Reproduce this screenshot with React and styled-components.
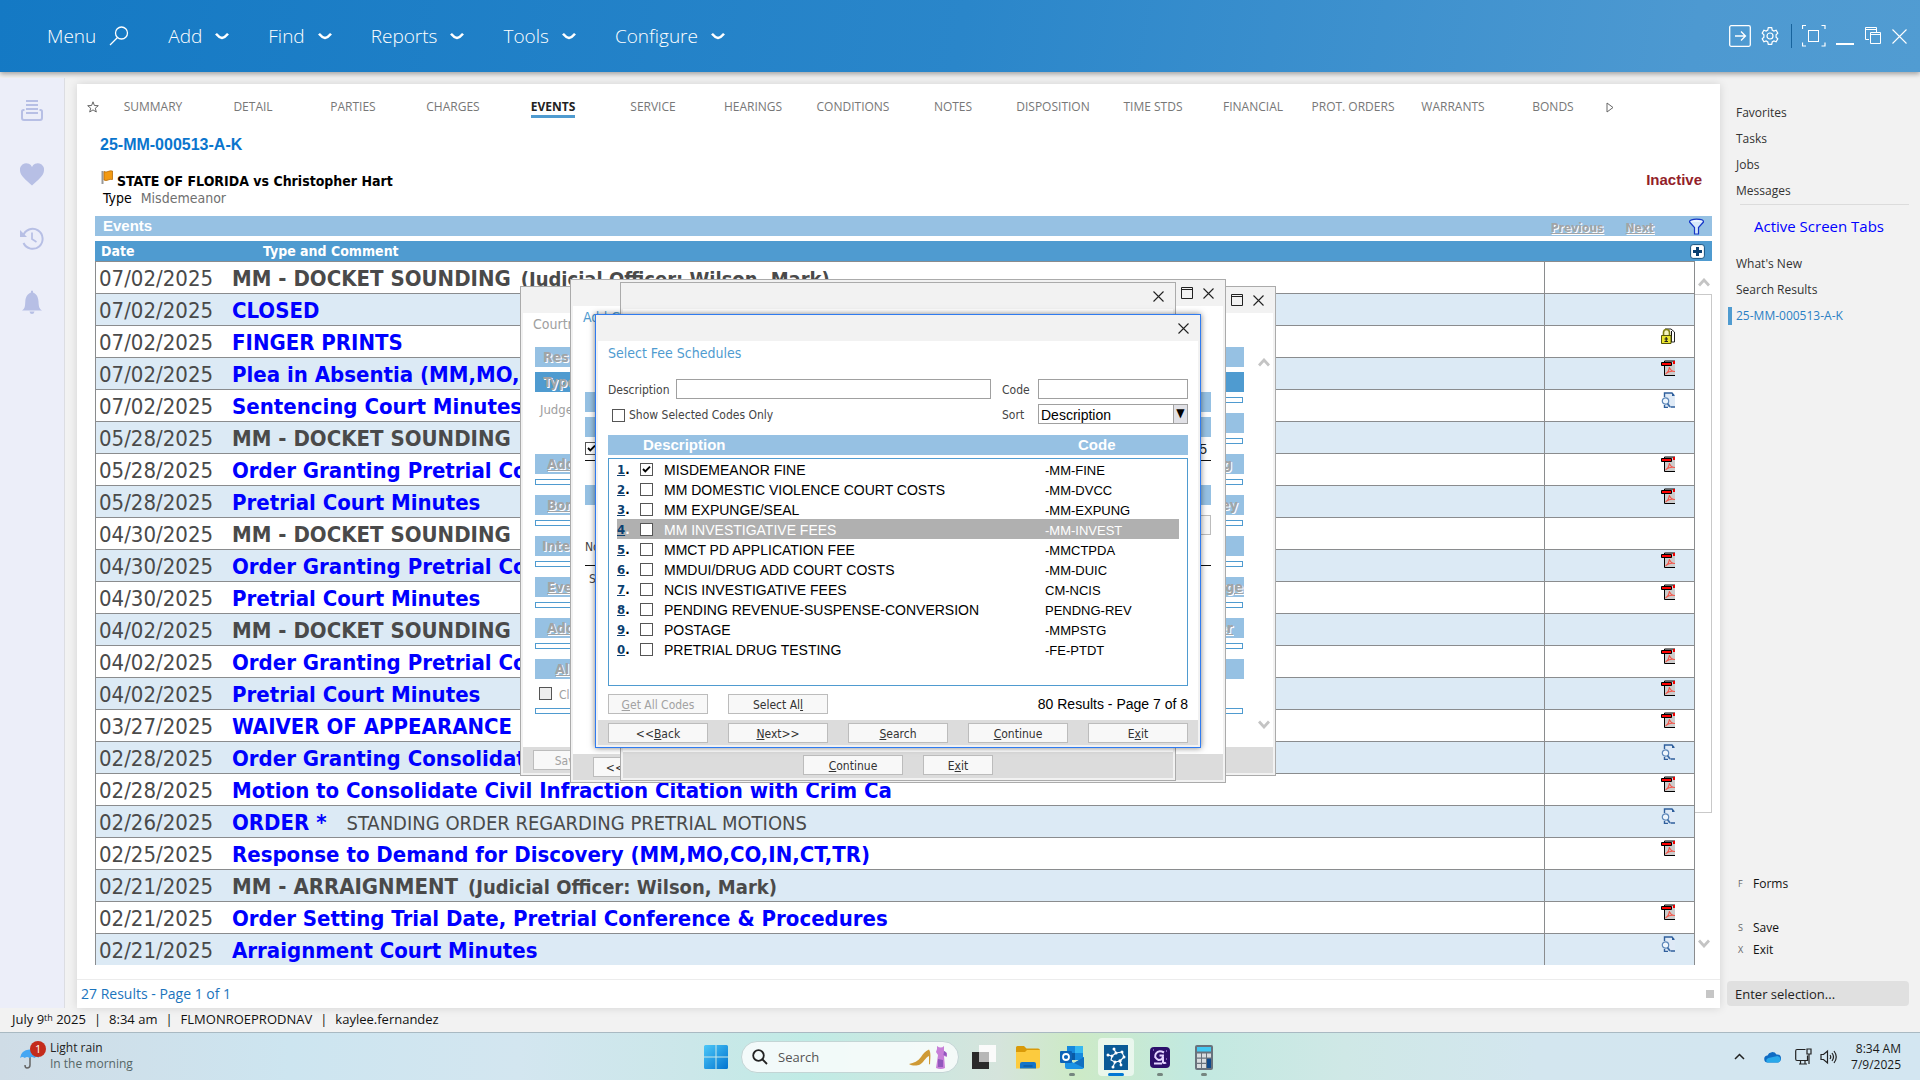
import * as React from 'react';
import styled, { createGlobalStyle, css } from 'styled-components';

const fonts = {
    segoe: '"Open Sans", "Noto Sans", sans-serif',
    tahoma: '"DejaVu Sans Condensed", "DejaVu Sans", "Noto Sans", sans-serif',
    arial: '"Liberation Sans", Arial, sans-serif',
};

const colors = {
    blue: '#4f9bd0',
    lightblue: '#96c1e3',
    stripe: '#dceaf5',
    link: '#0000ff',
    page: '#f2f2f2',
    rule: '#8a8c8e',
    footer: '#dcdcdc',
    rail: '#b7bfe5',
};

const GlobalStyle = createGlobalStyle`
    * { box-sizing: border-box; }
    body { margin: 0; background: ${ colors.page }; font-family: ${ fonts.segoe }; }
    button, input, select { font: inherit; color: inherit; margin: 0; }
    table { border-collapse: collapse; }
`;

const App = styled.div`
    display: flex;
    flex-direction: column;
    min-height: 100vh;
`;

/* ---------- top bar ---------- */

const TopBar = styled.header`
    display: flex;
    align-items: center;
    justify-content: space-between;
    height: 72px;
    padding: 0 13px 0 47px;
    background: linear-gradient(100deg, #1479c4 0%, #2a86ca 50%, #4d99d1 88%, #519cd2 100%);
    box-shadow: 0 2px 5px rgba(0, 0, 0, 0.35);
    color: #fff;
`;

const MenuNav = styled.nav`
    display: flex;
    gap: 39px;
`;

const MenuButton = styled.button`
    display: flex;
    align-items: center;
    gap: 13px;
    padding: 0;
    border: 0;
    background: none;
    font-size: 19px;
    font-weight: 300;
    line-height: 28px;
`;

const WindowTools = styled.div`
    display: flex;
    align-items: center;
    gap: 10px;
`;

const ToolButton = styled.button`
    display: flex;
    padding: 0;
    border: 0;
    background: none;
`;

const ToolDivider = styled.span`
    width: 1px;
    height: 24px;
    margin: 0 0 0 2px;
    background: #17639c;
`;

/* ---------- workspace ---------- */

const Workspace = styled.div`
    display: flex;
    flex: 1;
    padding-top: 6px;
`;

const Rail = styled.aside`
    display: flex;
    flex-direction: column;
    align-items: center;
    gap: 40px;
    flex: 0 0 65px;
    padding-top: 20px;
    background: #eceef9;
    border-right: 1px solid #dcdde2;
`;

const RailButton = styled.button`
    display: flex;
    padding: 0;
    border: 0;
    background: none;
    color: ${ colors.rail };
`;

const CasePanel = styled.main`
    display: flex;
    flex-direction: column;
    flex: 1;
    min-width: 0;
    margin: 6px 0 0 12px;
    background: #fff;
    box-shadow: 0 0 9px rgba(0, 0, 0, 0.13);
`;

const Tabs = styled.nav`
    display: flex;
    align-items: center;
    height: 46px;
    padding-left: 9px;
`;

const TabIcon = styled.button`
    display: flex;
    justify-content: ${ props => props.$wide ? 'center' : 'flex-start' };
    width: ${ props => props.$wide ? '13px' : '17px' };
    padding: 0 1px;
    border: 0;
    background: none;
    color: #666;
`;

const Tab = styled.a`
    flex: 0 0 100px;
    text-align: center;
    text-decoration: none;
    font-size: 12px;
    line-height: 17px;
    color: ${ props => props.$active ? '#222' : '#777' };
    font-weight: ${ props => props.$active ? 700 : 400 };

    & > span {
        display: inline-block;
        margin-top: 2px;
        border-bottom: 3px solid ${ props => props.$active ? colors.blue : 'transparent' };
    }
`;

const CaseNumber = styled.h1`
    margin: 5px 0 0 23px;
    font: bold 16px/20px ${ fonts.arial };
    color: #0a75cd;
`;

const CaseTitle = styled.div`
    display: flex;
    align-items: flex-start;
    justify-content: space-between;
    margin: 15px 18px 0 24px;
`;

const Caption = styled.h2`
    display: flex;
    align-items: flex-start;
    gap: 4px;
    margin: 0;
    font: bold 14px/20px ${ fonts.tahoma };
    color: #000;

    & > span {
        padding-top: 1px;
    }
`;

const CaseStatus = styled.strong`
    font: bold 15px/20px ${ fonts.arial };
    color: #931f2a;
`;

const CaseType = styled.p`
    margin: 0 0 0 26px;
    font: 14px/15px ${ fonts.tahoma };
    color: #707070;

    & > b {
        margin-right: 9px;
        font-weight: 400;
        color: #000;
    }
`;

const EventsBar = styled.div`
    display: flex;
    align-items: center;
    height: 20px;
    margin: 10px 8px 5px 18px;
    padding: 0 7px 0 8px;
    background: ${ colors.lightblue };
    color: #fff;
    font: bold 15px/20px ${ fonts.arial };
`;

const PageLinks = styled.div`
    display: flex;
    gap: 22px;
    margin: 4px 34px 0 auto;
    font: bold 12px/16px ${ fonts.tahoma };
`;

const PageLink = styled.a`
    color: #a2a4a6;
    text-decoration: underline;
    text-shadow: 1px 1px #fff;
`;

const EventsArea = styled.div`
    display: flex;
    margin: 0 8px 0 18px;
`;

const TableWrap = styled.div`
    flex: 1;
    min-width: 0;
`;

const EventTable = styled.table`
    width: 100%;
    table-layout: fixed;
    border-collapse: separate;
    border-spacing: 0;
    font-family: ${ fonts.tahoma };
    color: #4a4a4a;

    th {
        height: 20px;
        padding: 0 6px;
        background: ${ colors.blue };
        color: #fff;
        font-size: 14px;
        line-height: 20px;
        text-align: left;
    }

    th:nth-child(2) {
        padding-left: 31px;
    }

    td {
        height: 32px;
        padding: 2px 0 0;
        border-top: 1px solid ${ colors.rule };
        white-space: nowrap;
        overflow: hidden;
        font-size: 22px;
        line-height: 29px;
    }

    td:first-child {
        padding-left: 3px;
        border-left: 1px solid ${ colors.rule };
    }

    td:last-child {
        border-left: 1px solid ${ colors.rule };
        border-right: 1px solid ${ colors.rule };
        vertical-align: top;
    }

    tbody tr:nth-child(even) {
        background: ${ colors.stripe };
    }
`;

const EventName = styled.span`
    font-weight: 700;
`;

const EventLink = styled.a`
    color: ${ colors.link };
    font-weight: 700;
    text-decoration: none;
`;

const Officer = styled.b`
    margin-left: 10px;
    font-size: 20px;
    line-height: 20px;
`;

const Comment = styled.span`
    margin-left: 20px;
    font-size: 20px;
    line-height: 20px;
`;

const DocButton = styled.button`
    display: flex;
    margin: 0 0 0 auto;
    padding: 0 19px 0 0;
    border: 0;
    background: none;
`;

const ScrollBar = styled.div`
    display: flex;
    flex-direction: column;
    align-items: center;
    flex: 0 0 17px;
    min-width: 0;
    color: #c4c4c4;
`;

const AddCell = styled.div`
    display: flex;
    align-items: center;
    align-self: stretch;
    justify-content: flex-end;
    height: 20px;
    padding-right: 7px;
    background: ${ colors.blue };

    & > button {
        flex: none;
    }
`;

const ScrollTop = styled.div`
    display: flex;
    height: 29px;
    padding-top: 17px;
`;

const ScrollThumb = styled.div`
    flex: 0 0 519px;
    align-self: stretch;
    margin: 4px 0 126px;
    border: 1px solid #c9c9c9;
    border-left: 0;
`;

const PanelFooter = styled.div`
    display: flex;
    align-items: center;
    justify-content: space-between;
    flex: 1;
    min-height: 29px;
    margin-top: 14px;
    padding: 0 6px 0 4px;
    border-top: 1px solid #ececec;
    font-size: 14px;
    line-height: 20px;
    font-family: ${ fonts.segoe };
    color: #1b74bd;
`;

const Grip = styled.span`
    width: 8px;
    height: 8px;
    background: #c6c6c6;
`;

/* ---------- side menu ---------- */

const SideMenu = styled.aside`
    display: flex;
    flex-direction: column;
    flex: 0 0 200px;
    padding: 26px 11px 2px 7px;
    font-size: 12px;
`;

const SideLink = styled.a`
    padding-left: 4px;
    margin-left: 1px;
    border-left: 4px solid transparent;
    line-height: 18px;
    margin-bottom: 8px;
    color: #333;
    text-decoration: none;

    ${ props => props.$active && css`
        border-color: ${ colors.blue };
        color: #2a7fc4;
    ` }
`;

const SideHeading = styled.h3`
    margin: -4px 0 0 13px;
    padding: 11px 0 19px 14px;
    border-top: 1px solid #dcdcdc;
    color: ${ colors.link };
    font-weight: 400;
    font-size: 15px;
    line-height: 20px;
`;

const Actions = styled.div`
    display: flex;
    flex-direction: column;
    gap: 4px;
    margin: auto 0 22px 11px;
`;

const Action = styled.button`
    display: flex;
    align-items: center;
    padding: 0;
    border: 0;
    background: none;
    color: #111;
    line-height: 18px;
    margin-bottom: ${ props => props.$apart ? '22px' : '0' };

    & > kbd {
        width: 15px;
        font-family: ${ fonts.segoe };
        font-size: 9px;
        text-align: left;
        color: #666;
    }
`;

const Selection = styled.input`
    width: 100%;
    height: 25px;
    padding: 0 8px;
    border: 0;
    border-radius: 4px;
    background: #e0e0e0;
    font-size: 13px;

    &::placeholder {
        color: #222;
        opacity: 1;
    }
`;

const StatusBar = styled.footer`
    height: 24px;
    padding-left: 12px;
    font-size: 13px;
    line-height: 22px;
    color: #111;

    & > span + span::before {
        content: '|';
        margin: 0 8px;
    }

    sup {
        font-size: 9px;
        line-height: 1px;
        vertical-align: 3px;
    }
`;

/* ---------- dialog windows ---------- */

const Frame = styled.section`
    position: absolute;
    left: ${ props => props.$x }px;
    top: ${ props => props.$y }px;
    width: ${ props => props.$w }px;
    height: ${ props => props.$h }px;
    display: flex;
    flex-direction: column;
    padding: 0 2px 2px;
    border: 1px solid ${ props => props.$focus ? '#2f7bf0' : '#ababab' };
    background: ${ colors.page };
    box-shadow: ${ props => props.$focus ? '0 0 6px rgba(0, 0, 0, 0.5)' : 'none' };
    font: 12px/16px ${ fonts.tahoma };
    color: #444;
`;

const TitleBar = styled.div`
    display: flex;
    align-items: center;
    justify-content: flex-end;
    gap: 10px;
    flex: 0 0 26px;
    padding-right: 9px;
    color: #222;
`;

const Body = styled.div`
    flex: 1;
    min-height: 0;
    padding: ${ props => props.$pad || '0 10px' };
    background: #fff;
    overflow: hidden;
`;

const ButtonBar = styled.div`
    display: flex;
    align-items: center;
    flex: 0 0 ${ props => props.$tall ? '26px' : '25px' };
    gap: 20px;
    padding: 0 ${ props => props.$pad || 10 }px;
    justify-content: ${ props => props.$center ? 'center' : 'flex-start' };
    background: ${ colors.footer };
`;

const PushButton = styled.button`
    flex: 0 0 ${ props => props.$narrow ? '70px' : '100px' };
    height: 20px;
    padding: 1px 0 0;
    border: 1px solid #bcbcbc;
    background: #f8f8f8;
    color: #333;
    line-height: 18px;

    &:disabled {
        color: #a2a2a2;
    }
`;

const WindowTitle = styled.h2`
    margin: ${ props => props.$m || '0' };
    font-weight: 400;
    font-size: 14px;
    line-height: ${ props => props.$m ? '22px' : '24px' };
    color: ${ props => props.$dim ? '#a0a0a0' : colors.blue };
`;

const SearchForm = styled.div`
    display: grid;
    grid-template-columns: 68px 1fr 47px 150px;
    grid-auto-rows: 20px;
    row-gap: 5px;
    align-items: center;
    margin: 14px 0 11px;

    & > label {
        padding-top: 2px;
    }

    & > label:nth-of-type(2), & > label:nth-of-type(4) {
        padding-left: 11px;
    }
`;

const TextField = styled.input`
    width: 100%;
    height: 20px;
    padding: 0 3px;
    border: 1px solid #a0a0a0;
`;

const CheckLine = styled.label`
    display: flex;
    align-items: center;
    gap: 4px;
    grid-column: span 2;
    padding-left: 4px;
`;

const Check = styled.input.attrs({ type: 'checkbox' })`
    appearance: none;
    flex: none;
    display: block;
    width: 13px;
    height: 13px;
    border: 1px solid #555;
    background: ${ props => props.disabled ? '#eee' : '#fff' };

    &:checked {
        background: #fff url("data:image/svg+xml,%3Csvg xmlns='http://www.w3.org/2000/svg' viewBox='0 0 11 11'%3E%3Cpath d='M2 5l2.3 2.4L9 2.6' fill='none' stroke='%23000' stroke-width='1.9'/%3E%3C/svg%3E");
    }
`;

const SortBox = styled.div`
    display: grid;
    grid-template-columns: 1fr 14px;
    height: 20px;
    border: 1px solid #a0a0a0;

    & > select {
        grid-area: 1 / 1 / 2 / 3;
        appearance: none;
        padding: 2px 2px 0;
        border: 0;
        background: transparent;
        font: 14px/16px ${ fonts.arial };
        color: #000;
    }

    & > span {
        grid-area: 1 / 2;
        border-left: 1px solid #a0a0a0;
        background: #e1e1e6;
        font-size: 12px;
        line-height: 17px;
        text-align: center;
        color: #000;
        pointer-events: none;
    }
`;

const ListHead = styled.div`
    display: flex;
    margin-bottom: 3px;
    padding-left: 35px;
    background: ${ colors.lightblue };
    color: #fff;
    font: bold 15px/20px ${ fonts.arial };

    & > span:first-child {
        flex: 0 0 435px;
    }
`;

const ListBox = styled.div`
    height: 228px;
    padding: 0 8px;
    border: 1px solid ${ colors.blue };
`;

const FeeTable = styled.table`
    width: 100%;
    table-layout: fixed;
    font: 14px/18px ${ fonts.arial };
    color: #000;

    td {
        height: 20px;
        padding: 2px 0 0;
    }

    td:nth-child(2) {
        padding: 0;
    }

    td:first-child {
        font: bold 13px/18px ${ fonts.tahoma };
    }

    td:first-child > u {
        color: #0b3f70;
    }

    td:last-child {
        padding-top: 4px;
        font-size: 13px;
        line-height: 16px;
    }
`;

const FeeRow = styled.tr`
    background: ${ props => props.$on ? '#b0b0b0' : 'none' };
    color: ${ props => props.$on ? '#fff' : '#000' };
`;

const ListFoot = styled.div`
    display: flex;
    gap: 20px;
    margin-top: 8px;

    & > span {
        margin-left: auto;
        font: 14px/20px ${ fonts.arial };
        color: #000;
    }
`;

const Columns = styled.div`
    display: flex;
    margin: 12px 29px 0 12px;
`;

const Column = styled.div`
    flex: 1;
    text-align: ${ props => props.$right ? 'right' : 'left' };
`;

const Strip = styled.div`
    height: 20px;
    margin-bottom: 5px;
    padding: 0 ${ props => props.$pad || 8 }px;
    background: ${ props => props.$dark ? colors.blue : colors.lightblue };
    color: #a2a4a6;
    font-weight: bold;
    font-size: 14px;
    line-height: 20px;
    text-shadow: 1px 1px #fff;
    text-decoration: ${ props => props.$link ? 'underline' : 'none' };
`;

const EmptyBox = styled.div`
    height: 6px;
    margin: 0 1px 10px 0;
    border: 1px solid ${ colors.blue };
`;

const Judge = styled.div`
    height: 57px;
    padding: 5px;
    color: #a0a0a0;
    font-size: 13px;
`;

const DimCheck = styled.label`
    display: flex;
    gap: 7px;
    height: 24px;
    padding: 3px 4px 0;
    color: #a0a0a0;
`;

const SideArrows = styled.div`
    display: flex;
    flex-direction: column;
    justify-content: space-between;
    flex: none;
    height: 371px;
    color: #c4c4c4;
    margin: 11px -26px 0 14px;
`;

const FeeLine = styled.div`
    display: flex;
    justify-content: space-between;
    height: ${ props => props.$h }px;
    padding: ${ props => props.$p || '0' };
    border-bottom: 1px solid ${ props => props.$plain ? 'transparent' : '#111' };
    margin-bottom: ${ props => props.$gap || 0 }px;

    & > output {
        padding-right: 4px;
        font: 14px/14px ${ fonts.arial };
        color: #222;
    }
`;

/* ---------- taskbar ---------- */

const Taskbar = styled.footer`
    display: grid;
    grid-template-columns: 1fr auto 1fr;
    align-items: center;
    height: 48px;
    border-top: 1px solid #a9b9c2;
    background: linear-gradient(90deg, #cfdce6 0%, #cde5f0 15%, #d3e6f0 27%, #cbe7e9 36%, #c0ebe5 42%, #d5e4dc 52%,
        #cdeac6 56%, #c2e9e0 62%, #cfe8e6 70%, #d3e6ef 80%, #d3e6f1 100%);
`;

const Weather = styled.button`
    display: flex;
    align-items: center;
    gap: 3px;
    padding: 0 0 2px 18px;
    border: 0;
    background: none;
    text-align: left;
    font-size: 12px;
    line-height: 16px;
    color: #222;

    & small {
        display: block;
        font-size: 12px;
        color: #566;
    }
`;

const TaskButtons = styled.div`
    display: flex;
    align-items: center;
`;

const TaskButton = styled.button`
    display: flex;
    flex-direction: column;
    align-items: center;
    justify-content: space-between;
    width: 36px;
    height: 38px;
    margin: 0 4px;
    padding: 7px 0 0;
    border: 0;
    border-radius: 4px;
    background: ${ props => props.$active ? 'rgba(255, 255, 255, 0.6)' : 'none' };

    &::after {
        content: '';
        width: ${ props => props.$active ? '16px' : '6px' };
        height: 3px;
        border-radius: 2px;
        background: ${ props => props.$active ? '#0078d4' : props.$running ? '#75857f' : 'transparent' };
    }
`;

const SearchPill = styled.label`
    display: flex;
    align-items: center;
    gap: 10px;
    width: 218px;
    height: 32px;
    margin: 0 3px 0 3px;
    padding: 0 10px;
    border: 1px solid #c3d5d5;
    border-radius: 16px;
    background: rgba(250, 253, 253, 0.85);

    & > input {
        flex: 1;
        min-width: 0;
        padding: 0;
        border: 0;
        background: none;
        font-size: 13px;
    }

    & > input::placeholder {
        color: #555;
        opacity: 1;
    }
`;

const Tray = styled.div`
    display: flex;
    align-items: center;
    justify-content: flex-end;
    gap: 8px;
    padding-right: 19px;
    text-align: right;
    font-size: 12px;
    line-height: 16px;
    color: #1a1a1a;

    & > svg:first-child {
        margin-right: 11px;
    }

    & > svg:nth-child(2) {
        margin-right: 6px;
    }

    & > time {
        margin-left: 6px;
    }
`;

/* ---------- icons ---------- */

const Svg = ({ w, h, children, ...rest }) =>
    <svg width={ w } height={ h } viewBox={ `0 0 ${ w } ${ h }` } fill="none" aria-hidden="true" { ...rest }>
        { children }
    </svg>;

const MenuChevron = () =>
    <Svg w={ 14 } h={ 8 }><path d="M1 1.800Q4 5.500 7 6 10 5.500 13 1.800" stroke="#fff" strokeWidth="2.500" /></Svg>;

const Cross = ({ size = 11, color = '#222' }) =>
    <Svg w={ size } h={ size } stroke={ color } strokeWidth="1.100">
        <path d={ `M.5 .5L${ size - 0.5 } ${ size - 0.5 }M${ size - 0.5 } .5L.5 ${ size - 0.5 }` } />
    </Svg>;

const Maximize = () =>
    <Svg w={ 12 } h={ 12 } stroke="#222"><path d="M.5 .5h11v11H.5zM.5 2.500h11" /></Svg>;

const GrayChevron = ({ up }) =>
    <Svg w={ 12 } h={ 9 } style={ { flex: 'none' } }>
        <path d={ up ? 'M1 7.500L6 2l5 5.500' : 'M1 1.500L6 7l5-5.500' } stroke="currentColor" strokeWidth="2.800" />
    </Svg>;

const PdfIcon = () =>
    <Svg w={ 14 } h={ 16 }>
        <path d="M3.500 1h11v14.500h-11z" fill="#ccc" stroke="#000" />
        <path d="M12 1h2v3h-2z" fill="#e00" />
        <path d="M.5 2.500h10v3H.5z" fill="#f00" stroke="#000" />
        <path d="M4.500 14c2-1 3.500-4 4-7 .5 2.500 2.500 4.500 5.500 4.500-3-.5-6-.5-8.500 1.500" stroke="#f4564a" strokeWidth="1.200" />
    </Svg>;

const DocIcon = () =>
    <Svg w={ 14 } h={ 16 }>
        <path d="M3.500 1H11l3 2.500V15H3.500z" fill="#dfeaf6" />
        <path d="M3.500 5V1H11l2 2.500M9.500 15H14M3.500 13v2.500H7" stroke="#2f5f9c" strokeWidth="1.400" />
        <path d="M11 1v3h3z" fill="#2f5f9c" />
        <circle cx="4.500" cy="9" r="3.200" fill="#eef6fd" stroke="#5d87b8" strokeWidth="1.200" />
        <path d="M6.500 11.500l2.500 3.500" stroke="#3f6ea8" strokeWidth="1.800" />
    </Svg>;

const LockIcon = () =>
    <Svg w={ 14 } h={ 16 }>
        <path d="M4 1h6l3.500 3v10H9" fill="#fff" stroke="#222" />
        <path d="M10 3h1v11h-1z" fill="#111" />
        <path d="M2.500 8V4.500a3 3 0 016 0V8" stroke="#7f7f10" strokeWidth="1.600" fill="#f4f4c0" />
        <path d="M.5 7.500h9.500v8H.5z" fill="#e9e52f" stroke="#55550a" />
        <path d="M5.200 9v5M3.500 11h3.500M3.500 13.500h3.500" stroke="#222" strokeWidth="1.200" />
    </Svg>;

const docIcons = { pdf: PdfIcon, doc: DocIcon, lock: LockIcon };

/* ---------- data ---------- */

const menus = ['Add', 'Find', 'Reports', 'Tools', 'Configure'];

const tabs = ['SUMMARY', 'DETAIL', 'PARTIES', 'CHARGES', 'EVENTS', 'SERVICE', 'HEARINGS', 'CONDITIONS', 'NOTES',
    'DISPOSITION', 'TIME STDS', 'FINANCIAL', 'PROT. ORDERS', 'WARRANTS', 'BONDS'];

const officer = '(Judicial Officer: Wilson, Mark)';

const events = [
    { date: '07/02/2025', name: 'MM - DOCKET SOUNDING', officer },
    { date: '07/02/2025', link: 'CLOSED' },
    { date: '07/02/2025', link: 'FINGER PRINTS', icon: 'lock' },
    { date: '07/02/2025', link: 'Plea in Absentia (MM,MO,C', icon: 'pdf' },
    { date: '07/02/2025', link: 'Sentencing Court Minutes', icon: 'doc' },
    { date: '05/28/2025', name: 'MM - DOCKET SOUNDING' },
    { date: '05/28/2025', link: 'Order Granting Pretrial Co', icon: 'pdf' },
    { date: '05/28/2025', link: 'Pretrial Court Minutes', icon: 'pdf' },
    { date: '04/30/2025', name: 'MM - DOCKET SOUNDING' },
    { date: '04/30/2025', link: 'Order Granting Pretrial Co', icon: 'pdf' },
    { date: '04/30/2025', link: 'Pretrial Court Minutes', icon: 'pdf' },
    { date: '04/02/2025', name: 'MM - DOCKET SOUNDING' },
    { date: '04/02/2025', link: 'Order Granting Pretrial Co', icon: 'pdf' },
    { date: '04/02/2025', link: 'Pretrial Court Minutes', icon: 'pdf' },
    { date: '03/27/2025', link: 'WAIVER OF APPEARANCE', icon: 'pdf' },
    { date: '02/28/2025', link: 'Order Granting Consolidat', icon: 'doc' },
    { date: '02/28/2025', link: 'Motion to Consolidate Civil Infraction Citation with Crim Ca', icon: 'pdf' },
    { date: '02/26/2025', link: 'ORDER *', comment: 'STANDING ORDER REGARDING PRETRIAL MOTIONS', icon: 'doc' },
    { date: '02/25/2025', link: 'Response to Demand for Discovery (MM,MO,CO,IN,CT,TR)', icon: 'pdf' },
    { date: '02/21/2025', name: 'MM - ARRAIGNMENT', officer },
    { date: '02/21/2025', link: 'Order Setting Trial Date, Pretrial Conference & Procedures', icon: 'pdf' },
    { date: '02/21/2025', link: 'Arraignment Court Minutes', icon: 'doc' },
];

const fees = [
    ['1', 'MISDEMEANOR FINE', '-MM-FINE'],
    ['2', 'MM DOMESTIC VIOLENCE COURT COSTS', '-MM-DVCC'],
    ['3', 'MM EXPUNGE/SEAL', '-MM-EXPUNG'],
    ['4', 'MM INVESTIGATIVE FEES', '-MM-INVEST'],
    ['5', 'MMCT PD APPLICATION FEE', '-MMCTPDA'],
    ['6', 'MMDUI/DRUG ADD COURT COSTS', '-MM-DUIC'],
    ['7', 'NCIS INVESTIGATIVE FEES', 'CM-NCIS'],
    ['8', 'PENDING REVENUE-SUSPENSE-CONVERSION', 'PENDNG-REV'],
    ['9', 'POSTAGE', '-MMPSTG'],
    ['0', 'PRETRIAL DRUG TESTING', '-FE-PTDT'],
];

/* ---------- sections ---------- */

const Header = () =>
    <TopBar>
        <MenuNav>
            <MenuButton>
                Menu
                <Svg w={ 20 } h={ 20 } stroke="#fff" strokeWidth="1.300">
                    <circle cx="12.500" cy="7" r="6" /><path d="M8.500 11.500L1 19" />
                </Svg>
            </MenuButton>
            { menus.map(menu => <MenuButton key={ menu }>{ menu }<MenuChevron /></MenuButton>) }
        </MenuNav>
        <WindowTools>
            <ToolButton aria-label="Go">
                <Svg w={ 22 } h={ 22 } stroke="#fff" strokeWidth="1.300">
                    <rect x=".7" y=".7" width="20.600" height="20.600" rx="1.500" />
                    <path d="M6 11h10M12 6.500l4.500 4.500-4.500 4.500" />
                </Svg>
            </ToolButton>
            <ToolButton aria-label="Settings">
                <Svg w={ 18 } h={ 18 } stroke="#fff" strokeWidth="1.200">
                    <path d="M7.300 .7h3.400l.5 2.300 1.700 1 2.200-.8 1.700 3-1.700 1.600v2.400l1.700 1.600-1.700 3-2.200-.8-1.700 1-.5 2.300H7.300l-.5-2.300-1.700-1-2.200.8-1.700-3 1.700-1.600V7.800L1.200 6.200l1.700-3 2.200.8 1.700-1z" />
                    <circle cx="9" cy="9" r="3" />
                </Svg>
            </ToolButton>
            <ToolDivider />
            <ToolButton aria-label="Full screen">
                <Svg w={ 24 } h={ 22 } stroke="#fff">
                    <path d="M4 .5H.5V4M19.500 .5H23V4M.5 17.500V21H4M23 17.500V21h-3.500" strokeWidth="1.200" />
                    <rect x="6.500" y="5.500" width="10" height="11" />
                </Svg>
            </ToolButton>
            <ToolButton aria-label="Minimize">
                <Svg w={ 18 } h={ 20 }><path d="M0 18h18" stroke="#fff" strokeWidth="2" /></Svg>
            </ToolButton>
            <ToolButton aria-label="Restore">
                <Svg w={ 18 } h={ 20 } stroke="#fff">
                    <path d="M5 13.500H1.500v-12h11V6M1.500 3.500h11M6.500 6.500h10v11h-10zM6.500 8.500h10" />
                </Svg>
            </ToolButton>
            <ToolButton aria-label="Close"><Cross size={ 15 } color="#fff" /></ToolButton>
        </WindowTools>
    </TopBar>;

const LeftRail = () =>
    <Rail>
        <RailButton aria-label="Inbox">
            <Svg w={ 24 } h={ 24 } stroke="currentColor" strokeWidth="2">
                <path d="M6 3h12M6 7h12M6 11h12M6 15h12" strokeWidth="1.800" />
                <path d="M4.500 12H3.500Q2 12 2 13.500V20q0 2 2 2h16q2 0 2-2v-6.500q0-1.500-1.500-1.500h-1" />
            </Svg>
        </RailButton>
        <RailButton aria-label="Favorites">
            <Svg w={ 24 } h={ 24 } fill="currentColor">
                <path d="M12 23.500C6 18 0 13.500 0 8.500A6.300 6.300 0 0112 5a6.300 6.300 0 0112 3.500c0 5-6 9.500-12 15z" />
            </Svg>
        </RailButton>
        <RailButton aria-label="History">
            <Svg w={ 24 } h={ 24 } stroke="currentColor" strokeWidth="2">
                <path d="M3 10A10 10 0 1 1 3.500 17" /><path d="M12 6.500V13l4.500 3" strokeWidth="1.700" />
                <path d="M0 4v7h7z" fill="currentColor" stroke="none" />
            </Svg>
        </RailButton>
        <RailButton aria-label="Alerts">
            <Svg w={ 24 } h={ 24 } fill="currentColor">
                <path d="M2 20.500c3-2 3-4 3.300-9C5.500 6.500 8 3.500 11 2.500V1q1-1.200 2 0v1.500c3 1 5.300 4 5.500 9 .3 5 .5 7 3.500 9zM9.500 21.500h5q-.5 2.500-2.500 2.500t-2.500-2.500z" />
            </Svg>
        </RailButton>
    </Rail>;

const EventRow = ({ event }) => {
    const Icon = docIcons[event.icon];
    return (
        <tr>
            <td>{ event.date }</td>
            <td>
                { event.name && <EventName>{ event.name }</EventName> }
                { event.link && <EventLink href="#event">{ event.link }</EventLink> }
                { event.officer && <Officer>{ event.officer }</Officer> }
                { event.comment && <Comment>{ event.comment }</Comment> }
            </td>
            <td>{ Icon && <DocButton aria-label="Open document"><Icon /></DocButton> }</td>
        </tr>
    );
};

const CaseEvents = () =>
    <CasePanel>
        <Tabs>
            <TabIcon aria-label="Favorite">
                <Svg w={ 12 } h={ 12 } stroke="currentColor">
                    <path d="M6 .8l1.400 3.700 3.900.2-3 2.500 1 3.800L6 8.900 2.700 11l1-3.800-3-2.500 3.900-.2z" />
                </Svg>
            </TabIcon>
            { tabs.map(tab =>
                <Tab key={ tab } href={ `#${ tab.toLowerCase() }` } $active={ tab === 'EVENTS' }>
                    <span>{ tab }</span>
                </Tab>
            ) }
            <TabIcon $wide aria-label="More tabs">
                <Svg w={ 8 } h={ 11 } stroke="currentColor"><path d="M1 1l6 4.500L1 10z" /></Svg>
            </TabIcon>
        </Tabs>
        <CaseNumber>25-MM-000513-A-K</CaseNumber>
        <CaseTitle>
            <Caption>
                <Svg w={ 12 } h={ 15 }>
                    <path d="M1.500 1v13" stroke="#999" strokeWidth="2" />
                    <path d="M3 1.500q2 1 4 0t4.500-.5v8.500q-2.500-.5-4.500.5t-4 0z" fill="#f39a12" stroke="#b86b06" strokeWidth=".8" />
                </Svg>
                <span>STATE OF FLORIDA vs Christopher Hart</span>
            </Caption>
            <CaseStatus>Inactive</CaseStatus>
        </CaseTitle>
        <CaseType><b>Type</b>Misdemeanor</CaseType>
        <EventsBar>
            Events
            <PageLinks>
                <PageLink href="#previous">Previous</PageLink>
                <PageLink href="#next">Next</PageLink>
            </PageLinks>
            <ToolButton aria-label="Filter">
                <Svg w={ 17 } h={ 17 } stroke="#1436c8" strokeWidth="1.200">
                    <ellipse cx="8.500" cy="3.500" rx="7" ry="2.300" fill="#eaf4ff" />
                    <path d="M1.500 4l5 5.500v6.500h4V9.500l5-5.500" fill="#d6e9fa" />
                </Svg>
            </ToolButton>
        </EventsBar>
        <EventsArea>
            <TableWrap>
                <EventTable>
                    <colgroup>
                        <col style={ { width: 137 } } />
                        <col />
                        <col style={ { width: 151 } } />
                    </colgroup>
                    <thead>
                        <tr><th>Date</th><th>Type and Comment</th><th /></tr>
                    </thead>
                    <tbody>
                        { events.map((event, i) => <EventRow key={ i } event={ event } />) }
                    </tbody>
                </EventTable>
            </TableWrap>
            <ScrollBar>
                <AddCell>
                    <ToolButton aria-label="Add event">
                        <Svg w={ 15 } h={ 15 }>
                            <rect x=".6" y=".6" width="13.800" height="13.800" rx="2.500" fill="#fff" stroke="#14507f" />
                            <path d="M7.500 3v9M3 7.500h9" stroke="#0b3f70" strokeWidth="3" />
                        </Svg>
                    </ToolButton>
                </AddCell>
                <ScrollTop><GrayChevron up /></ScrollTop>
                <ScrollThumb />
                <GrayChevron />
            </ScrollBar>
        </EventsArea>
        <PanelFooter>27 Results - Page 1 of 1<Grip /></PanelFooter>
    </CasePanel>;

const RightMenu = () =>
    <SideMenu>
        <SideLink href="#favorites">Favorites</SideLink>
        <SideLink href="#tasks">Tasks</SideLink>
        <SideLink href="#jobs">Jobs</SideLink>
        <SideLink href="#messages">Messages</SideLink>
        <SideHeading>Active Screen Tabs</SideHeading>
        <SideLink href="#new">What's New</SideLink>
        <SideLink href="#search">Search Results</SideLink>
        <SideLink href="#case" $active>25-MM-000513-A-K</SideLink>
        <Actions>
            <Action $apart><kbd>F</kbd>Forms</Action>
            <Action><kbd>S</kbd>Save</Action>
            <Action><kbd>X</kbd>Exit</Action>
        </Actions>
        <Selection placeholder="Enter selection..." aria-label="Enter selection" />
    </SideMenu>;

const Window = ({ x, y, w, h, focus, max, label, children }) =>
    <Frame $x={ x } $y={ y } $w={ w } $h={ h } $focus={ focus } aria-label={ label }>
        <TitleBar>
            { max && <ToolButton aria-label="Maximize"><Maximize /></ToolButton> }
            <ToolButton aria-label="Close"><Cross /></ToolButton>
        </TitleBar>
        { children }
    </Frame>;

const leftStrips = ['Add', 'Bon', 'Inter', 'Eve', 'Add'];
const rightStrips = [['', 8], ['g', 12], ['ey', 6], ['', 8], ['rge', 1], ['er', 11]];

const CourtroomWindow = () =>
    <Window x={ 520 } y={ 286 } w={ 756 } h={ 490 } max label="Courtroom">
        <Body $pad="0">
            <WindowTitle $dim $m="0 0 0 10px">Courtr</WindowTitle>
            <Columns>
                <Column>
                    <Strip>Res</Strip>
                    <Strip $dark>Type</Strip>
                    <Judge>Judge</Judge>
                    { leftStrips.map((text, i) =>
                        <React.Fragment key={ i }>
                            <Strip $link={ i !== 2 } $pad={ i === 2 ? 7 : 12 }>{ text }</Strip>
                            <EmptyBox />
                        </React.Fragment>
                    ) }
                    <Strip $link $pad={ 20 }>All</Strip>
                    <DimCheck><Check disabled />Cl</DimCheck>
                    <EmptyBox />
                </Column>
                <Column $right>
                    <Strip />
                    <Strip $dark />
                    <EmptyBox />
                    { rightStrips.map(([text, pad], i) =>
                        <React.Fragment key={ i }>
                            <Strip $link={ i > 3 } $pad={ pad }>{ text }</Strip>
                            <EmptyBox />
                        </React.Fragment>
                    ) }
                    <Strip />
                    <DimCheck />
                    <EmptyBox />
                </Column>
                <SideArrows><GrayChevron up /><GrayChevron /></SideArrows>
            </Columns>
        </Body>
        <ButtonBar $tall><PushButton $narrow disabled>Save</PushButton></ButtonBar>
    </Window>;

const AddCostWindow = () =>
    <Window x={ 570 } y={ 279 } w={ 656 } h={ 504 } max label="Add Cost">
        <Body $pad="0 12px">
            <WindowTitle $m="0 0 64px -2px">Add C</WindowTitle>
            <Strip />
            <Strip />
            <FeeLine $h={ 19 } $gap={ 24 }><Check defaultChecked aria-label="Selected" /><output>5</output></FeeLine>
            <Strip />
            <FeeLine $h={ 25 } $plain $p="5px 0 0"><span /><PushButton aria-label="Lookup" /></FeeLine>
            <FeeLine $h={ 31 } $p="4px 0 0">No</FeeLine>
            <FeeLine $h={ 24 } $plain $p="5px 4px">S</FeeLine>
        </Body>
        <ButtonBar $tall $pad={ 20 }><PushButton $narrow>&lt;&lt;Back</PushButton></ButtonBar>
    </Window>;

const PlainWindow = () =>
    <Window x={ 620 } y={ 282 } w={ 556 } h={ 499 } label="Confirm">
        <Body />
        <ButtonBar $tall $center>
            <PushButton><u>C</u>ontinue</PushButton>
            <PushButton $narrow>E<u>x</u>it</PushButton>
        </ButtonBar>
    </Window>;

const FeeSchedules = () =>
    <Window x={ 595 } y={ 314 } w={ 606 } h={ 434 } focus label="Select Fee Schedules">
        <Body>
            <WindowTitle>Select Fee Schedules</WindowTitle>
            <SearchForm>
                <label htmlFor="description">Description</label>
                <TextField id="description" />
                <label htmlFor="code">Code</label>
                <TextField id="code" />
                <CheckLine><Check />Show Selected Codes Only</CheckLine>
                <label htmlFor="sort">Sort</label>
                <SortBox>
                    <select id="sort" defaultValue="Description"><option>Description</option><option>Code</option></select>
                    <span>▼</span>
                </SortBox>
            </SearchForm>
            <ListHead><span>Description</span><span>Code</span></ListHead>
            <ListBox>
                <FeeTable>
                    <colgroup>
                        <col style={ { width: 23 } } />
                        <col style={ { width: 24 } } />
                        <col />
                        <col style={ { width: 134 } } />
                    </colgroup>
                    <tbody>
                        { fees.map(([key, name, code]) =>
                            <FeeRow key={ key } $on={ key === '4' }>
                                <td><u>{ key }</u>.</td>
                                <td><Check defaultChecked={ key === '1' } aria-label={ name } /></td>
                                <td>{ name }</td>
                                <td>{ code }</td>
                            </FeeRow>
                        ) }
                    </tbody>
                </FeeTable>
            </ListBox>
            <ListFoot>
                <PushButton disabled><u>G</u>et All Codes</PushButton>
                <PushButton>Select Al<u>l</u></PushButton>
                <span>80 Results - Page 7 of 8</span>
            </ListFoot>
        </Body>
        <ButtonBar>
            <PushButton>&lt;&lt;<u>B</u>ack</PushButton>
            <PushButton><u>N</u>ext&gt;&gt;</PushButton>
            <PushButton><u>S</u>earch</PushButton>
            <PushButton><u>C</u>ontinue</PushButton>
            <PushButton>E<u>x</u>it</PushButton>
        </ButtonBar>
    </Window>;

const SystemTaskbar = () =>
    <Taskbar>
        <Weather>
            <Svg w={ 29 } h={ 32 }>
                <path d="M12 14v11q0 3-3 3-2 0-2-3" stroke="#666" strokeWidth="1.500" />
                <path d="M2 18Q3 10 11.500 9.500 20 10 21 18q-2.500-2-4.700 0-2.500-2-4.800 0-2.500-2-4.700 0-2.300-2-4.800 0z" fill="#45a7f3" />
                <circle cx="20" cy="9" r="8" fill="#c42b1c" />
                <text x="17" y="13" fontSize="11" fill="#fff">1</text>
            </Svg>
            <span>Light rain<small>In the morning</small></span>
        </Weather>
        <TaskButtons>
            <TaskButton aria-label="Start">
                <Svg w={ 24 } h={ 24 }>
                    <defs>
                        <linearGradient id="win" x1="0" y1="0" x2="1" y2="1">
                            <stop offset="0" stopColor="#4cc8f8" /><stop offset="1" stopColor="#0173d0" />
                        </linearGradient>
                    </defs>
                    <path d="M0 1.500Q0 0 1.500 0H11.500V11.500H0zM12.500 0h10Q24 0 24 1.500v10H12.500zM0 12.500h11.500V24h-10Q0 24 0 22.500zM12.500 12.500H24v10q0 1.500-1.500 1.500h-10z" fill="url(#win)" />
                </Svg>
            </TaskButton>
            <SearchPill>
                <Svg w={ 16 } h={ 16 } stroke="#222" strokeWidth="1.800">
                    <circle cx="6.500" cy="6.500" r="5.300" /><path d="M10.500 10.500l4.500 4.500" />
                </Svg>
                <input type="search" placeholder="Search" />
                <Svg w={ 40 } h={ 26 }>
                    <path d="M1 20c5-1 9-3 12-7 2-3 4-6 8-7.500 2 3 1.500 7 1 15l-1-.5v-8c-4 2-5 6-9 8.500-3 1.500-8 1.500-11-.5z" fill="#cf9a35" />
                    <path d="M29 2q4 3 7 0v5l3 2v4l-3-1 1 12q-4 2-9 0l2-13-2-3 1-3z" fill="#c77fd8" />
                    <path d="M36 7q3 1 2.500 5l-3-1zM30 15l5 1v7h-5z" fill="#9158bd" />
                </Svg>
            </SearchPill>
            <TaskButton aria-label="Task view">
                <Svg w={ 24 } h={ 24 }>
                    <path d="M7 0h17v17H7z" fill="#fafafa" /><path d="M0 7h17v17H0z" fill="#2a2a2a" />
                    <path d="M7 7h10v10H7z" fill="#b7b7b7" />
                </Svg>
            </TaskButton>
            <TaskButton aria-label="File Explorer">
                <Svg w={ 24 } h={ 24 }>
                    <path d="M0 2.500Q0 1 1.500 1H8l2.500 2.500H22q2 0 2 2V8H0z" fill="#d99a08" />
                    <path d="M0 7h9l2-2h13v16.500q0 2-2 2H0z" fill="#fccb3e" />
                    <path d="M4 23.500V19q0-2 2-2h12q2 0 2 2v4.500z" fill="#1474c8" /><path d="M7.500 21h9" stroke="#0a4c8c" />
                </Svg>
            </TaskButton>
            <TaskButton $running aria-label="Outlook">
                <Svg w={ 24 } h={ 24 }>
                    <path d="M7 1h16v14H7z" fill="#1689dd" /><path d="M15 1h8v7h-8z" fill="#35b8f1" />
                    <path d="M7 8h8v7H7z" fill="#0a5ba5" /><path d="M5 13l9 5 10-6v10q0 2-2 2H7q-2 0-2-2z" fill="#1a93e6" />
                    <path d="M14 18l10 5V12z" fill="#1270c0" />
                    <rect y="6" width="12" height="12" rx="1" fill="#0c64b8" />
                    <circle cx="6" cy="12" r="3" stroke="#fff" strokeWidth="1.800" />
                </Svg>
            </TaskButton>
            <TaskButton $active $running aria-label="Case manager">
                <Svg w={ 24 } h={ 25 }>
                    <path d="M0 0h24v25H0z" fill="#0a5a96" />
                    <path d="M10 4l2 4 6-1M12 8l-4 3-4-1M8 11l-1 4 4 2-2 5M11 17l5-1 4-4-2-5M16 16l1 4" stroke="#fff" strokeWidth="1.100" />
                    <g fill="#fff">
                        <circle cx="10" cy="4" r="1.500" /><circle cx="12" cy="8" r="1.600" /><circle cx="18" cy="7" r="1.500" />
                        <circle cx="4" cy="10" r="1.500" /><circle cx="8" cy="11" r="1.500" /><circle cx="20" cy="12" r="1.500" />
                        <circle cx="16" cy="16" r="1.700" /><circle cx="11" cy="17" r="1.600" /><circle cx="9" cy="22" r="1.500" />
                        <circle cx="17" cy="20" r="1.400" />
                    </g>
                </Svg>
            </TaskButton>
            <TaskButton $running aria-label="Assistant">
                <Svg w={ 20 } h={ 24 }>
                    <rect y="2" width="20" height="21" rx="4" fill="#2c0f6b" />
                    <path d="M14 7.500Q8.500 4.500 6 8.500T8.500 15q4.500 0 4.500-4.500H9.500M13 12v5.500q2 1 3 0M4 18.500h8" stroke="#e3d4ff" strokeWidth="2" />
                    <path d="M3 5h1M4 12h1M16 6h1M16 14h1" stroke="#c9a8ff" />
                </Svg>
            </TaskButton>
            <TaskButton $running aria-label="Calculator">
                <Svg w={ 18 } h={ 25 }>
                    <rect width="18" height="25" rx="2" fill="#68727c" /><path d="M2 2h14v4.500H2z" fill="#42c8f2" />
                    <path d="M2 8.500h4v4H2zM7 8.500h4v4H7zM12 8.500h4v4h-4zM2 13.700h4v4H2zM7 13.700h4v4H7zM2 19h4v4H2zM7 19h4v4H7z" fill="#d8dcdf" />
                    <path d="M12 13.700h4V23h-4z" fill="#114a8c" />
                </Svg>
            </TaskButton>
        </TaskButtons>
        <Tray>
            <Svg w={ 11 } h={ 7 }><path d="M1 6l4.500-4.500L10 6" stroke="#222" strokeWidth="1.500" /></Svg>
            <Svg w={ 17 } h={ 12 }>
                <path d="M4 11.500A3.500 3.500 0 013.500 4.500 5 5 0 0112.500 3.500 4 4 0 0113.500 11.500z" fill="#0f6cc4" />
                <path d="M3 11.500q-2-3 1.500-4.500l9-2Q17 6 16.500 9q-.5 2.500-3 2.500z" fill="#28a8ea" />
            </Svg>
            <Svg w={ 17 } h={ 17 } stroke="#222" strokeWidth="1.200">
                <path d="M10.500 1.500H2Q.7 1.500 .7 3v8q0 1.500 1.300 1.500h10.500V7.500M4 16h8M5.500 12.500V16M10 12.500V16M12 1h4v5h-4zM14 6v10" />
            </Svg>
            <Svg w={ 17 } h={ 16 } stroke="#222" strokeWidth="1.200">
                <path d="M1 5.500h2.500L7.500 2v12l-4-3.500H1zM10 6q1.500 2 0 4M12 4q3 4 0 8M14 2q4.500 6 0 12" />
            </Svg>
            <time>8:34 AM<br />7/9/2025</time>
        </Tray>
    </Taskbar>;

export default () =>
    <App>
        <GlobalStyle />
        <Header />
        <Workspace>
            <LeftRail />
            <CaseEvents />
            <RightMenu />
        </Workspace>
        <StatusBar>
            <span>July 9<sup>th</sup> 2025</span><span>8:34 am</span><span>FLMONROEPRODNAV</span><span>kaylee.fernandez</span>
        </StatusBar>
        <SystemTaskbar />
        <CourtroomWindow />
        <AddCostWindow />
        <PlainWindow />
        <FeeSchedules />
    </App>;
